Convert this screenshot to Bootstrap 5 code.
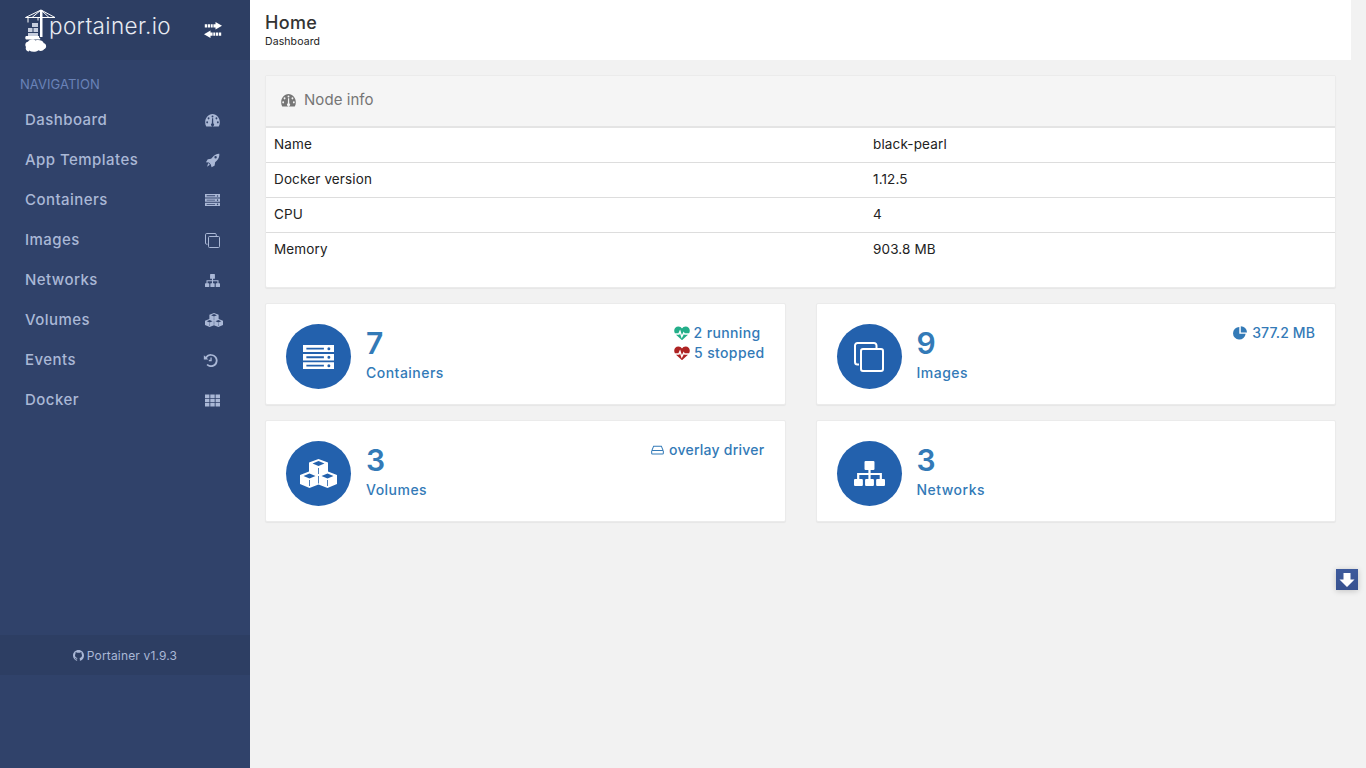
<!doctype html>
<html lang="en">
<head>
<meta charset="utf-8">
<title>Portainer</title>
<link href="https://cdn.jsdelivr.net/npm/bootstrap@5.3.0/dist/css/bootstrap.min.css" rel="stylesheet">
<style>
html,body{height:768px;overflow:hidden}
body{font-family:Inter,"Open Sans",sans-serif;font-size:14px;background:#f2f2f2;color:#333}
.pt-app{height:768px}
.pt-side{width:250px;flex:none;background:#30426a;color:#aab8d6}
.pt-brand{height:60px;background:#2d3e63;padding:0 28px 0 25px;color:#fff}
.pt-logo{width:32px;height:44px;flex:none;margin-top:-1px}
.pt-logotext{font-size:22.5px;font-weight:300;letter-spacing:.36px;margin-left:-8px;margin-top:-8px;color:#e8ebf2}
.pt-sw{width:18px;height:16px}
.pt-head{height:40px;padding:16px 0 0 20px;color:#6a83b8;font-size:13px;line-height:16px;letter-spacing:.05px}
.pt-item{height:40px;padding:0 30px 0 25px;color:#aab8d6;font-size:15px;letter-spacing:.45px;text-decoration:none;font-weight:500}
.pt-item svg{width:15px;height:15px}
.pt-item .pt-nserver{height:12px}
.pt-item .pt-ntach{height:13px}
.pt-item .pt-nsite{height:13px}
.pt-item .pt-ncube{width:18px;height:14px;margin-right:-3px}
.pt-item .pt-nhist{margin-right:2px}
.pt-navbox{height:575px}
.pt-foot{height:40px;background:#2d3e63;font-size:12px;letter-spacing:.16px;padding-top:1px}
.pt-foot svg{width:11px;height:11px;margin-right:3px}
.pt-main{width:1101px;flex:none}
.pt-top{height:60px;background:#fff;padding:12px 15px 0}
.pt-title{font-size:18px;line-height:21px;font-weight:500;letter-spacing:.3px;color:#333;margin:0}
.pt-sub{font-size:10.5px;line-height:16px;letter-spacing:.1px;color:#222;margin-top:1px}
.pt-body{padding:15px}
.pt-row{--bs-gutter-x:30px;--bs-gutter-y:15px}
.pt-card{border:1px solid #ebebeb;border-radius:2px;box-shadow:0 1px 1px rgba(0,0,0,.05);background:#fff}
.pt-nodecard{margin-bottom:15px}
.pt-cardh{height:52px;background:#f5f5f5;border-bottom:2px solid #e4e4e4;padding:0 15px 1px;color:#767676;font-size:15px;letter-spacing:.05px}
.pt-cardh svg{width:15px;height:13px;margin-right:8px;color:#767676}
.pt-tbl{margin:0 0 20px;font-size:13.5px;letter-spacing:.14px;font-weight:400;color:#222}
.pt-tbl td{padding:7px 8px 8px;line-height:19px;vertical-align:top;border-bottom:1px solid #ddd;color:#222;background:transparent}
.pt-tbl tr:last-child td{border-bottom:0}
.pt-c1{width:599px}
.pt-stat{height:102px;padding:20px;color:#337ab7}
.pt-circ{width:65px;height:65px;background:#2361ad;border-radius:50%;color:#fff;flex:none;margin-right:15px}
.pt-bserver{width:31px;height:24px}
.pt-bclone{width:30px;height:30px}
.pt-bcube{width:37px;height:29px}
.pt-bsite{width:31px;height:25px}
.pt-num{font-size:30px;line-height:38px;font-weight:600;letter-spacing:.2px}
.pt-lab{font-size:14px;line-height:20px;letter-spacing:.48px;font-weight:500;margin-top:1px}
.pt-note{font-size:14px;line-height:20px;letter-spacing:.36px;font-weight:500;text-align:right;margin-top:-1px}
.pt-beat{width:16px;height:14px;margin-right:4px;vertical-align:-2px}
.pt-pie{width:14px;height:14px;margin-right:5px;vertical-align:-2px}
.pt-hdd{width:13px;height:12px;margin-right:5px;vertical-align:-1px}
.pt-tight{letter-spacing:.12px}
.pt-tight2{letter-spacing:.25px}
.pt-g{color:#23ae89}
.pt-r{color:#ae2323}
.pt-rline{padding-right:4px}
.pt-down{position:fixed;left:1336px;top:569px;width:22px;height:21px;background:linear-gradient(#3d5a9c,#38528f);color:#fff;box-shadow:0 1px 6px rgba(0,0,0,.2)}
.pt-down svg{width:16px;height:16px}
</style>
</head>
<body>
<svg width="0" height="0" class="position-absolute">
<defs>
<symbol id="i-tach" viewBox="0 2 16 12" preserveAspectRatio="none"><path fill="currentColor" fill-rule="evenodd" d="M8 2C3.600 2 .2 5.400.2 9.600c0 1.400.3 2.600 1 3.700.1.200.3.3.5.3h12.600c.2 0 .4-.1.5-.3.7-1.100 1-2.300 1-3.700C15.800 5.400 12.400 2 8 2zM8 3.300a1 1 0 1 1 0 2 1 1 0 0 1 0-2zM3.800 5a1 1 0 1 1 0 2 1 1 0 0 1 0-2zM12.200 5a1 1 0 1 1 0 2 1 1 0 0 1 0-2zM2.300 8.700a1 1 0 1 1 0 2 1 1 0 0 1 0-2zM13.700 8.700a1 1 0 1 1 0 2 1 1 0 0 1 0-2zM7.500 6h1.200l.1 4.500a1.600 1.600 0 1 1-1.500 0z"/></symbol>
<symbol id="i-rocket" viewBox="0 0 16 16"><path fill="currentColor" fill-rule="evenodd" d="M15.300.9c.2 2.800-.7 5.400-2.800 7.400l-1.700 1.500-.5 3.300c0 .2-.1.3-.3.4l-3 1.800-.8-3.100-2-2L1 9.900 2.800 7c.1-.2.3-.3.4-.3l3.300-.5L8 4.500C10 2.300 12.500.7 15.300.9zM11.300 3.300a1.300 1.300 0 1 0 0 2.600 1.300 1.300 0 0 0 0-2.600zM3.500 10.700l1.700 1.700-3 2.300z"/></symbol>
<symbol id="i-server" viewBox="0.5 3.500 23 17" preserveAspectRatio="none"><path fill="currentColor" fill-rule="evenodd" d="M.5 3.500h23v5h-23zM3 5.400v1.300h13V5.400zM19.700 5.100a1.100 1.100 0 1 0 0 2.200 1.100 1.100 0 0 0 0-2.200zM.5 9.800h23v4.700h-23zM3 11.500v1.300h13v-1.300zM19.700 11.100a1.100 1.100 0 1 0 0 2.200 1.100 1.100 0 0 0 0-2.200zM.5 15.800h23v4.700h-23zM3 17.500v1.300h13v-1.300zM19.700 17.100a1.100 1.100 0 1 0 0 2.200 1.100 1.100 0 0 0 0-2.200z"/></symbol>
<symbol id="i-clone" viewBox="0 0 30 30"><path fill="none" stroke="currentColor" stroke-width="2" d="M5 22.500H3.500A2.500 2.500 0 0 1 1 20V3.500A2.500 2.500 0 0 1 3.500 1H20a2.500 2.500 0 0 1 2.500 2.500V6"/><rect x="7" y="7" width="22" height="22" rx="2" fill="none" stroke="currentColor" stroke-width="2"/></symbol>
<symbol id="i-sitemap" viewBox="1 2 28 25" preserveAspectRatio="none"><path fill="currentColor" d="M11.500 2h7a1 1 0 0 1 1 1v7a1 1 0 0 1-1 1H16v3h10.200v6H28a1 1 0 0 1 1 1v5a1 1 0 0 1-1 1h-6a1 1 0 0 1-1-1v-5a1 1 0 0 1 1-1h2.200v-4H16v4h2a1 1 0 0 1 1 1v5a1 1 0 0 1-1 1h-6a1 1 0 0 1-1-1v-5a1 1 0 0 1 1-1h2v-4H5.800v4H8a1 1 0 0 1 1 1v5a1 1 0 0 1-1 1H2a1 1 0 0 1-1-1v-5a1 1 0 0 1 1-1h1.800v-6H14v-3h-2.500a1 1 0 0 1-1-1V3a1 1 0 0 1 1-1z"/></symbol>
<symbol id="i-cubes" viewBox="0 0 37 29" preserveAspectRatio="none"><path fill="currentColor" fill-rule="evenodd" d="M18.500 0L28 3.500V12.500L37 16V25L27.500 29 18.500 25.500 9.500 29 0 25V16L9 12.500V3.500zM18.500 2L12.500 4.500 18.500 7 24.500 4.500zM9.500 14.500L3.500 17 9.500 19.500 15.500 17zM27.500 14.500L21.500 17 27.500 19.500 33.500 17zM18.100 9V15H18.900V9zM9.100 21V27H9.900V21zM27.100 21V27H27.900V21zM18.100 17V24.500H18.900V17z"/></symbol>
<symbol id="i-hist" viewBox="0 0 16 16"><path fill="currentColor" d="M8.700 1.200a6.900 6.900 0 1 1-5 11.700l1.300-1.300a5.100 5.100 0 1 0-.9-6.200l1.600 1.600H.9V2.300L2.600 4a6.900 6.900 0 0 1 6.100-2.800zM7.900 4.700h1.400v4h-3.100V7.300h1.700z"/></symbol>
<symbol id="i-th" viewBox="0 0 15 15"><path fill="currentColor" d="M0 1.500h4.400v3.400H0zM5.300 1.500h4.400v3.400H5.300zM10.600 1.500H15v3.400h-4.400zM0 5.800h4.400v3.400H0zM5.300 5.800h4.400v3.400H5.300zM10.600 5.800H15v3.400h-4.400zM0 10.100h4.400v3.400H0zM5.300 10.100h4.400v3.400H5.300zM10.600 10.100H15v3.400h-4.400z"/></symbol>
<symbol id="i-ex" viewBox="0 0 18 16"><path fill="currentColor" d="M11.500 0L18 3.800 11.500 7.600V5.400H9.400V2.200h2.100zM.8 2.200h2.400v3.200H.8zM3.900 2.200h2.400v3.200H3.900zM7 2.200h1.700v3.200H7zM6.500 8.400v2.200h2.100v3.200H6.500V16L0 12.200zM9.300 10.600H11v3.200H9.300zM11.700 10.600h2.400v3.200h-2.400zM14.800 10.600h2.400v3.200h-2.400z"/></symbol>
<symbol id="i-beat" viewBox="0 0 16 14"><path fill="currentColor" fill-rule="evenodd" d="M4.400.5C6 .5 7.200 1.400 8 2.500 8.800 1.400 10 .5 11.600.5c2.500 0 4.200 1.800 4.200 4.200 0 1-.3 1.800-.7 2.500H10.700l-1-1.800-1.800 3.600-1.800-5.500-1.700 3.700H.9C.5 6.500.2 5.700.2 4.700.2 2.300 1.900.5 4.400.5zM2 8.700h3.400L6 7.400l1.700 5.200L10 8l.3.700H14L8 14.200z"/></symbol>
<symbol id="i-pie" viewBox="0 0 14 14"><path fill="currentColor" d="M6.300 1a6.300 6.300 0 1 0 6.300 6.800H6.300zM7.800.2v6.200H14A6.300 6.300 0 0 0 7.800.2z"/></symbol>
<symbol id="i-hdd" viewBox="0 0 15 14"><path fill="none" stroke="currentColor" stroke-width="1.200" d="M1 7.500L3 2.500h9l2 5M1.500 7.500h12a.8.800 0 0 1 .8.800v2.400a1 1 0 0 1-1 1H1.700a1 1 0 0 1-1-1V8.300a.8.800 0 0 1 .8-.8z"/></symbol>
<symbol id="i-gh" viewBox="0 0 16 16"><path fill="currentColor" d="M8 0C3.580 0 0 3.580 0 8c0 3.540 2.290 6.530 5.470 7.590.4.070.55-.17.55-.38 0-.19-.01-.82-.01-1.490-2.010.37-2.530-.49-2.690-.94-.09-.23-.48-.94-.82-1.130-.28-.15-.68-.52-.01-.53.630-.01 1.080.58 1.230.82.720 1.210 1.870.87 2.330.66.070-.52.280-.87.510-1.070-1.780-.2-3.640-.89-3.640-3.950 0-.87.310-1.590.820-2.150-.08-.2-.36-1.020.080-2.120 0 0 .670-.21 2.200.82.640-.18 1.320-.27 2-.27.680 0 1.360.09 2 .27 1.530-1.040 2.200-.82 2.200-.82.440 1.100.160 1.920.080 2.120.510.560.820 1.270.820 2.150 0 3.070-1.870 3.750-3.650 3.950.290.250.540.730.540 1.480 0 1.070-.01 1.930-.01 2.200 0 .210.150.460.550.380A8.013 8.013 0 0 0 16 8c0-4.420-3.580-8-8-8z"/></symbol>
<symbol id="i-down" viewBox="0 0 16 16"><path fill="currentColor" d="M4.500 1h7v6.500H15.500L8 15 .5 7.500h4z"/></symbol>
</defs>
</svg>
<div class="d-flex pt-app">
  <aside class="pt-side d-flex flex-column">
    <div class="pt-brand d-flex align-items-center justify-content-between">
      <div class="d-flex align-items-center">
        <svg class="pt-logo" viewBox="0 0 32 44" aria-hidden="true">
          <path fill="none" stroke="#fff" stroke-width="1" d="M.5 9.500L16 2l14 7.500M.5 9.500H30M16 2L7 9.500M16 2l8 7.500M3 9.500v5M13 9.500v3"/>
          <path fill="#fff" d="M15 2h2.500v27H15z"/>
          <path fill="#c7cede" d="M7 15h6v4H7zM3 20h4.500v4H3zM8.500 20h4.500v4H8.500zM3 25h10v3H3z"/>
          <path fill="#fff" d="M1 28h13v1.500c1.500.5 1.500 1.500 1 2H1c-1-1-1-2.500 0-3.500z"/>
          <path fill="#fff" d="M4 43.500c-2.500 0-4-2.500-3-4.500-1.500-2-.5-5 2-5.200 1-2.500 5.500-3.500 7.500-1.300 2.800-1.200 7.500-.2 8.300 2.800 2.700.3 3.400 4.600.2 6-1 1.800-3.800 2.200-5.500 1-2.800 2-6.500 2-9.500.2z"/>
        </svg>
        <span class="pt-logotext">portainer.io</span>
      </div>
      <svg class="pt-sw" aria-hidden="true"><use href="#i-ex"/></svg>
    </div>
    <div class="pt-navbox">
      <div class="pt-head">NAVIGATION</div>
      <a class="pt-item d-flex align-items-center justify-content-between" href="#">Dashboard<svg class="pt-ntach"><use href="#i-tach"/></svg></a>
      <a class="pt-item d-flex align-items-center justify-content-between" href="#">App Templates<svg><use href="#i-rocket"/></svg></a>
      <a class="pt-item d-flex align-items-center justify-content-between" href="#">Containers<svg class="pt-nserver"><use href="#i-server"/></svg></a>
      <a class="pt-item d-flex align-items-center justify-content-between" href="#">Images<svg><use href="#i-clone"/></svg></a>
      <a class="pt-item d-flex align-items-center justify-content-between" href="#">Networks<svg class="pt-nsite"><use href="#i-sitemap"/></svg></a>
      <a class="pt-item d-flex align-items-center justify-content-between" href="#">Volumes<svg class="pt-ncube"><use href="#i-cubes"/></svg></a>
      <a class="pt-item d-flex align-items-center justify-content-between" href="#">Events<svg class="pt-nhist"><use href="#i-hist"/></svg></a>
      <a class="pt-item d-flex align-items-center justify-content-between" href="#">Docker<svg><use href="#i-th"/></svg></a>
    </div>
    <div class="pt-foot d-flex align-items-center justify-content-center"><svg aria-hidden="true"><use href="#i-gh"/></svg>Portainer v1.9.3</div>
  </aside>
  <main class="pt-main d-flex flex-column">
    <header class="pt-top">
      <h1 class="pt-title">Home</h1>
      <div class="pt-sub">Dashboard</div>
    </header>
    <div class="pt-body">
      <div class="pt-card pt-nodecard">
        <div class="pt-cardh d-flex align-items-center"><svg aria-hidden="true"><use href="#i-tach"/></svg>Node info</div>
        <table class="table pt-tbl">
          <tbody>
            <tr><td class="pt-c1">Name</td><td>black-pearl</td></tr>
            <tr><td>Docker version</td><td>1.12.5</td></tr>
            <tr><td>CPU</td><td>4</td></tr>
            <tr><td>Memory</td><td>903.8 MB</td></tr>
          </tbody>
        </table>
      </div>
      <div class="row pt-row">
        <div class="col-6">
          <div class="pt-card pt-stat d-flex justify-content-between">
            <div class="d-flex">
              <div class="pt-circ d-flex align-items-center justify-content-center"><svg class="pt-bserver" aria-hidden="true"><use href="#i-server"/></svg></div>
              <div><div class="pt-num">7</div><div class="pt-lab">Containers</div></div>
            </div>
            <div class="pt-note">
              <div class="pt-rline"><svg class="pt-beat pt-g" aria-hidden="true"><use href="#i-beat"/></svg>2 running</div>
              <div><svg class="pt-beat pt-r" aria-hidden="true"><use href="#i-beat"/></svg>5 stopped</div>
            </div>
          </div>
        </div>
        <div class="col-6">
          <div class="pt-card pt-stat d-flex justify-content-between">
            <div class="d-flex">
              <div class="pt-circ d-flex align-items-center justify-content-center"><svg class="pt-bclone" aria-hidden="true"><use href="#i-clone"/></svg></div>
              <div><div class="pt-num">9</div><div class="pt-lab">Images</div></div>
            </div>
            <div class="pt-note pt-tight"><svg class="pt-pie" aria-hidden="true"><use href="#i-pie"/></svg>377.2 MB</div>
          </div>
        </div>
        <div class="col-6">
          <div class="pt-card pt-stat d-flex justify-content-between">
            <div class="d-flex">
              <div class="pt-circ d-flex align-items-center justify-content-center"><svg class="pt-bcube" aria-hidden="true"><use href="#i-cubes"/></svg></div>
              <div><div class="pt-num">3</div><div class="pt-lab">Volumes</div></div>
            </div>
            <div class="pt-note pt-tight2"><svg class="pt-hdd" aria-hidden="true"><use href="#i-hdd"/></svg>overlay driver</div>
          </div>
        </div>
        <div class="col-6">
          <div class="pt-card pt-stat d-flex justify-content-between">
            <div class="d-flex">
              <div class="pt-circ d-flex align-items-center justify-content-center"><svg class="pt-bsite" aria-hidden="true"><use href="#i-sitemap"/></svg></div>
              <div><div class="pt-num">3</div><div class="pt-lab">Networks</div></div>
            </div>
          </div>
        </div>
      </div>
    </div>
  </main>
</div>
<div class="pt-down d-flex align-items-center justify-content-center"><svg aria-hidden="true"><use href="#i-down"/></svg></div>
</body>
</html>
